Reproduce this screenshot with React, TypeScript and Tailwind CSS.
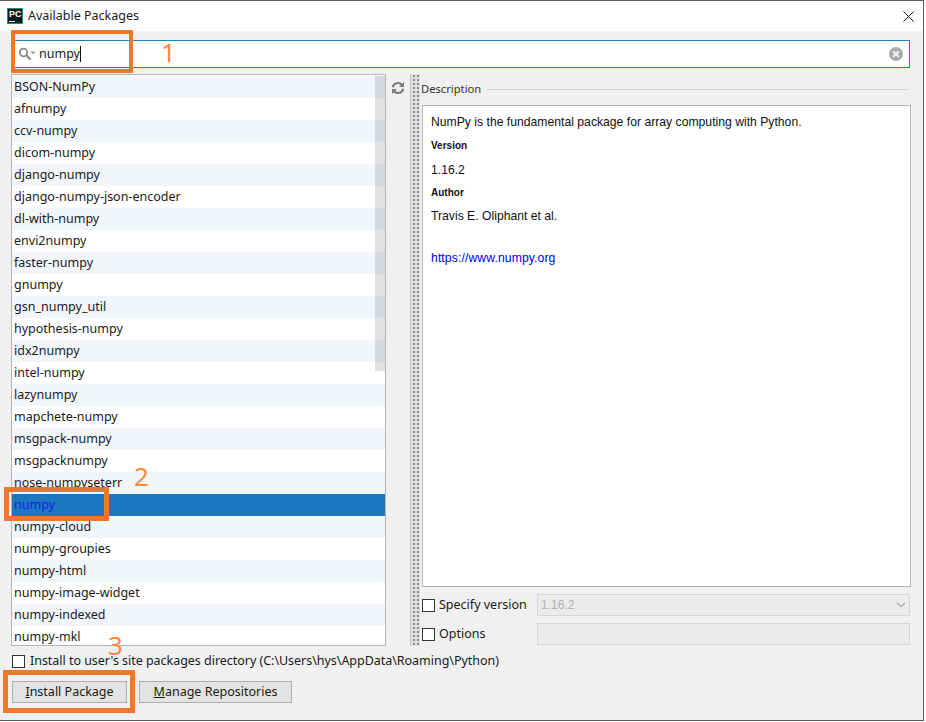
import React from 'react';

const packages = [
  'BSON-NumPy',
  'afnumpy',
  'ccv-numpy',
  'dicom-numpy',
  'django-numpy',
  'django-numpy-json-encoder',
  'dl-with-numpy',
  'envi2numpy',
  'faster-numpy',
  'gnumpy',
  'gsn_numpy_util',
  'hypothesis-numpy',
  'idx2numpy',
  'intel-numpy',
  'lazynumpy',
  'mapchete-numpy',
  'msgpack-numpy',
  'msgpacknumpy',
  'nose-numpyseterr',
  'numpy',
  'numpy-cloud',
  'numpy-groupies',
  'numpy-html',
  'numpy-image-widget',
  'numpy-indexed',
  'numpy-mkl',
];

function CheckBox() {
  return <span className="block w-[13px] h-[13px] bg-white border border-[#333] shrink-0" />;
}

function SearchIcon() {
  return (
    <svg width="18" height="14" viewBox="0 0 18 14" fill="none">
      <circle cx="5.5" cy="5.5" r="3.8" stroke="#8c8c8c" strokeWidth="1.8" />
      <path d="M8.5 8.5l3.5 3.5" stroke="#8c8c8c" strokeWidth="2.2" strokeLinecap="round" />
      <path d="M12.5 4.5h5l-2.5 3z" fill="#9a9a9a" />
    </svg>
  );
}

function ClearIcon() {
  return (
    <svg width="14" height="14" viewBox="0 0 14 14">
      <circle cx="7" cy="7" r="7" fill="#ababab" />
      <path d="M4.2 4.2l5.6 5.6M9.8 4.2l-5.6 5.6" stroke="#f4f4f4" strokeWidth="2" />
    </svg>
  );
}

function RefreshIcon() {
  return (
    <svg width="14" height="14" viewBox="0 0 14 14" fill="none">
      <path d="M1.800 6.200a5.200 5.200 0 0 1 9-2.400" stroke="#7a7a7a" strokeWidth="2.200" />
      <path d="M13 1v5H8z" fill="#7a7a7a" />
      <path d="M12.200 7.800a5.200 5.200 0 0 1-9 2.400" stroke="#7a7a7a" strokeWidth="2.200" />
      <path d="M1 13V8h5z" fill="#7a7a7a" />
    </svg>
  );
}

function PackageRow({ name, index }: { name: string; index: number }) {
  const selected = name === 'numpy';
  const striped = index % 2 === 0;
  return (
    <div
      className={`h-[22px] shrink-0 pl-[2px] leading-[21px] whitespace-nowrap ${
        selected ? 'bg-[#1b78c0] text-[#1c1cf0]' : striped ? 'bg-[#f2f6fb] text-[#1a1a1a]' : 'bg-white text-[#1a1a1a]'
      }`}
    >
      {name}
    </div>
  );
}

export default function App() {
  return (
    <div className="relative w-[926px] h-[722px] bg-white overflow-hidden font-['Noto_Sans',sans-serif] text-[12.5px] text-[#1a1a1a]">
      <div className="flex flex-col w-[924px] h-[721px] border-t border-r border-b border-[#5a5a5a] bg-[#f0f0f0]">
        {/* title bar */}
        <div className="flex items-center h-[30px] shrink-0 bg-white pl-[7px] pr-[9px]">
          <div className="flex flex-col w-[16px] h-[16px] bg-[#0d1a1c] border border-[#1d8f7c] pl-[1px] pt-px font-['Liberation_Sans',sans-serif] text-[9px] font-bold leading-[9px] text-white">
            PC
            <span className="block w-[6px] h-px mt-[2px] bg-white" />
          </div>
          <span className="ml-[5px]">Available Packages</span>
          <svg className="ml-auto" width="11" height="11" viewBox="0 0 11 11" fill="none">
            <path d="M0.500 0.500l10 10M10.500 0.500l-10 10" stroke="#111" strokeWidth="1" />
          </svg>
        </div>

        {/* search */}
        <div className="flex items-center h-[28px] shrink-0 mt-[9px] ml-[12px] mr-[13px] pl-[5px] pr-[6px] bg-white border border-[#1b84b8]">
          <SearchIcon />
          <span className="ml-[3px]">numpy</span>
          <span className="w-px h-[16px] bg-[#111]" />
          <span className="ml-auto">
            <ClearIcon />
          </span>
        </div>

        {/* list and details */}
        <div className="flex h-[572px] shrink-0 mt-[6px] ml-[11px] mr-[12px]">
          <div className="relative flex flex-col w-[375px] shrink-0 overflow-hidden bg-white border border-[#b4b4b4] pt-px">
            {packages.map((name, index) => (
              <PackageRow key={name} name={name} index={index} />
            ))}
            <div className="absolute top-[1px] right-0 w-[10px] h-[295px] bg-black/12" />
          </div>
          <div className="flex justify-center w-[25px] shrink-0 pt-[7px] border-r border-[#c8c8c8]">
            <RefreshIcon />
          </div>
          <div className="w-[9px] shrink-0 bg-[#dedede] bg-[radial-gradient(circle,#8a8a8a_0.7px,transparent_1px)] bg-size-[4px_4px] bg-position-[1px_0]" />
          <div className="flex flex-col flex-1 min-w-0 pl-px">
            <div className="flex items-center h-[31px] shrink-0 pb-[1px] pr-[3px]">
              <span className="text-[11.2px] text-[#333]">Description</span>
              <span className="flex-1 h-px ml-[6px] bg-[#d0d0d0]" />
            </div>
            <div className="flex flex-col h-[482px] shrink-0 ml-px bg-white border border-[#b4b4b4] px-[8px] pt-[8px] font-['Liberation_Sans',sans-serif] text-[12.2px] text-[#111]">
              <p className="leading-[17px]">NumPy is the fundamental package for array computing with Python.</p>
              <p className="mt-[8px] text-[10px] font-bold leading-[14px]">Version</p>
              <p className="mt-[9px] leading-[17px]">1.16.2</p>
              <p className="mt-[7px] text-[10px] font-bold leading-[14px]">Author</p>
              <p className="mt-[8px] leading-[17px]">Travis E. Oliphant et al.</p>
              <a className="mt-[25px] leading-[17px] text-[#0000ee] tracking-[0.1px]">https://www.numpy.org</a>
            </div>
            <div className="flex items-center h-[22px] shrink-0 mt-[7px] ml-px">
              <CheckBox />
              <span className="w-[99px] shrink-0 ml-[3px] pl-px">Specify version</span>
              <div className="flex items-center justify-between flex-1 h-[22px] mr-px px-[3px] bg-[#ebebeb] border border-[#d6d6d6] font-['Liberation_Sans',sans-serif] text-[12px] text-[#b0b0b0]">
                1.16.2
                <svg width="10" height="6" viewBox="0 0 10 6" fill="none">
                  <path d="M1 1l4 3.500L9 1" stroke="#a8a8a8" strokeWidth="1.300" />
                </svg>
              </div>
            </div>
            <div className="flex items-center h-[22px] shrink-0 mt-[7px] ml-px">
              <CheckBox />
              <span className="w-[99px] shrink-0 ml-[3px] pl-px">Options</span>
              <div className="flex-1 h-[22px] mr-px bg-[#ebebeb] border border-[#d6d6d6]" />
            </div>
          </div>
        </div>

        {/* install options */}
        <div className="flex items-center h-[14px] shrink-0 mt-[8px] ml-[12px]">
          <CheckBox />
          <span className="ml-[5px] whitespace-nowrap tracking-[-0.03px]">
            Install to user's site packages directory (C:\Users\hys\AppData\Roaming\Python)
          </span>
        </div>
        <div className="flex gap-[12px] mt-[13px] ml-[12px]">
          <button className="w-[115px] h-[22px] bg-[#e3e3e3] border border-[#adadad] leading-[20px]">
            <span className="underline">I</span>nstall Package
          </button>
          <button className="w-[153px] h-[22px] bg-[#e3e3e3] border border-[#adadad] leading-[20px]">
            <span className="underline">M</span>anage Repositories
          </button>
        </div>
      </div>

      {/* orange annotations */}
      <div className="absolute left-[11px] top-[30px] w-[122px] h-[43px] border-[4px] border-[#f0782a]" />
      <div className="absolute left-[4px] top-[487px] w-[105px] h-[34px] border-[5px] border-[#f0782a]" />
      <div className="absolute left-[3px] top-[670px] w-[132px] h-[43px] border-[5px] border-[#f0782a]" />
      <span className="absolute left-[161px] top-[41px] text-[26px] leading-[22px] text-[#f58a42]">1</span>
      <span className="absolute left-[134px] top-[465px] text-[26px] leading-[22px] text-[#f58a42]">2</span>
      <span className="absolute left-[108px] top-[634px] text-[26px] leading-[22px] text-[#f58a42]">3</span>
    </div>
  );
}
